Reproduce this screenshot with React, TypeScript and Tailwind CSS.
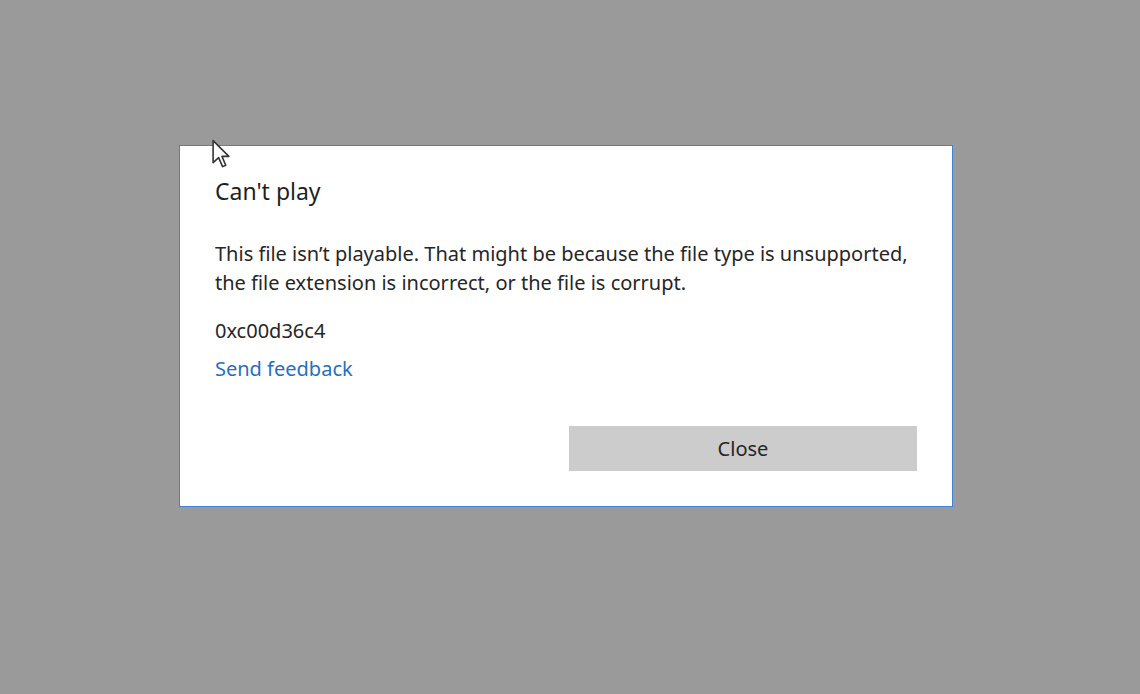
export default function App() {
  return (
    <div className="relative h-[694px] w-[1140px] overflow-hidden bg-[#9a9a9a] pl-[179px] pt-[145px] font-['Noto_Sans',sans-serif]">
      <div className="flex h-[362px] w-[774px] flex-col border border-[#3f83d4] bg-white pl-[35px] pr-[35px]">
        <h1 className="mt-[30px] text-[23px] leading-[30px] text-[#1f1f1f]">Can't play</h1>
        <p className="mt-[33px] whitespace-nowrap text-[20px] leading-[29px] text-[#262626]">
          This file isn’t playable. That might be because the file type is unsupported,
          <br />
          the file extension is incorrect, or the file is corrupt.
        </p>
        <div className="mt-[20px] text-[20px] leading-[28px] text-[#262626]">0xc00d36c4</div>
        <a className="mt-[10px] text-[20px] leading-[28px] text-[#2a6ebb]">Send feedback</a>
        <div className="mt-[43px] flex justify-end">
          <button className="h-[45px] w-[348px] bg-[#cccccc] text-[20px] text-[#262626]">Close</button>
        </div>
      </div>
      <svg className="absolute left-[211px] top-[139px]" width="20" height="30" viewBox="0 0 12 19">
        <path d="M1 1 L1 15 L4.5 11.8 L7 17.5 L9 16.6 L6.6 11 L11 11 Z" fill="#ffffff" stroke="#333" strokeWidth="1" strokeLinejoin="round" />
      </svg>
    </div>
  );
}
